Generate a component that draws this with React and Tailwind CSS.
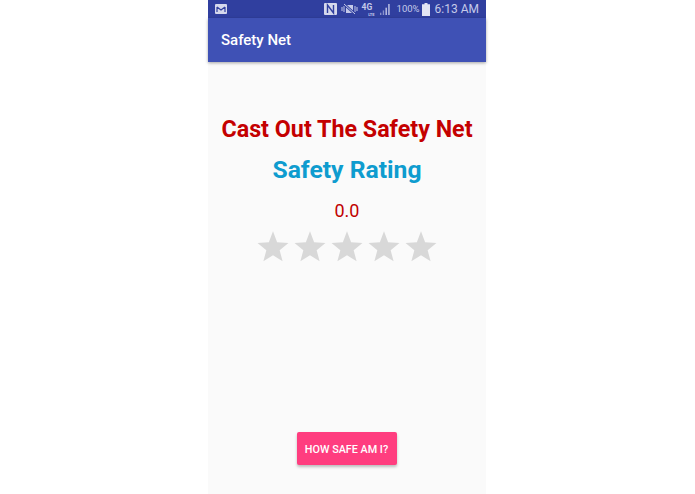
function Star() {
    return (
        <svg viewBox="0 0 24 24" className="w-[32px] h-[32px] text-[#d8d8d8]" fill="currentColor">
            <path d="M12 1 15.1 9.2 23.6 9.7 17 15.2 19.2 23.5 12 18.9 4.8 23.5 7 15.2.4 9.7 8.9 9.2z" />
        </svg>
    );
}

function StatusBar() {
    return (
        <div className="h-[18px] bg-[#303f9f] flex items-center pl-[7px] pr-[7px] text-[#c5cae9]">
            {/* mail notification */}
            <svg viewBox="0 0 12 10" className="w-[12px] h-[10px]">
                <rect width="12" height="10" rx="1" fill="#d5d8ec" />
                <path d="M2 3v5M10 3v5M2 3l4 3 4-3" fill="none" stroke="#303f9f" strokeWidth="1.2" />
            </svg>
            <div className="ml-auto flex items-center">
                {/* nfc */}
                <svg viewBox="0 0 13 12" className="w-[13px] h-[12px]">
                    <rect width="13" height="12" rx="1" fill="#d5d8ec" />
                    <path d="M3.5 10V2l6 8V2" fill="none" stroke="#303f9f" strokeWidth="1.4" />
                </svg>
                {/* vibrate / mute */}
                <svg viewBox="0 0 17 12" className="w-[17px] h-[12px] ml-[4px]" fill="none" stroke="#c5cae9" strokeWidth="1">
                    <path d="M1 4v4M3 3v6M14 3v6M16 4v4" />
                    <rect x="5" y="2" width="7" height="8" fill="#c5cae9" stroke="none" />
                    <path d="M3 1l11 10" stroke="#303f9f" strokeWidth="2.4" />
                    <path d="M3 1l11 10" />
                </svg>
                {/* 4G LTE */}
                <div className="ml-[4px] w-[13px] flex flex-col font-bold">
                    <span className="text-[8.5px] leading-[10px]">4G</span>
                    <span className="self-end text-[4px] leading-[5px]">LTE</span>
                </div>
                {/* signal */}
                <svg viewBox="0 0 12 12" className="w-[11px] h-[11px] ml-[5px]" fill="#c5cae9">
                    <rect x="0" y="9.5" width="1.5" height="2.5" opacity="0.6" />
                    <rect x="3" y="7" width="1.5" height="5" opacity="0.6" />
                    <rect x="6" y="4" width="1.5" height="8" />
                    <rect x="9" y="0" width="1.5" height="12" />
                </svg>
                <span className="ml-[6px] text-[9.5px] leading-none">100%</span>
                {/* battery */}
                <svg viewBox="0 0 8 13" className="w-[8px] h-[13px] ml-[2px]" fill="#e2e4f3">
                    <path d="M2.5 0h3v1.2H8V13H0V1.2h2.5z" />
                </svg>
                <span className="ml-[5px] text-[12px] leading-none">6:13 AM</span>
            </div>
        </div>
    );
}

export default function App() {
    return (
        <div className="h-[494px] bg-white flex justify-center font-['Roboto',sans-serif]">
            <div className="w-[278px] ml-[-1px] bg-[#fafafa] flex flex-col">
                <StatusBar />
                <div className="h-[44px] bg-[#3f51b5] flex items-center pl-[13px] text-white text-[15px] font-medium shadow-[0_1px_3px_rgba(0,0,0,0.35)]">
                    Safety Net
                </div>
                <div className="flex-1 flex flex-col items-center">
                    <h1 className="mt-[52px] text-[23.3px] leading-[30px] font-bold text-[#c40000]">Cast Out The Safety Net</h1>
                    <h2 className="mt-[9px] text-[24.7px] leading-[34px] font-bold text-[#0e9ccf]">Safety Rating</h2>
                    <p className="mt-[12px] text-[18px] leading-[24px] text-[#c00000]">0.0</p>
                    <div className="mt-[7px] flex gap-[5px]">
                        <Star /><Star /><Star /><Star /><Star />
                    </div>
                    <button className="mt-auto mb-[29px] ml-[-1px] w-[100px] h-[33px] pt-[3px] rounded-[2px] bg-[#ff3d7f] text-white text-[10.8px] font-medium shadow-[0_2px_3px_rgba(0,0,0,0.25)]">
                        HOW SAFE AM I?
                    </button>
                </div>
            </div>
        </div>
    );
}
